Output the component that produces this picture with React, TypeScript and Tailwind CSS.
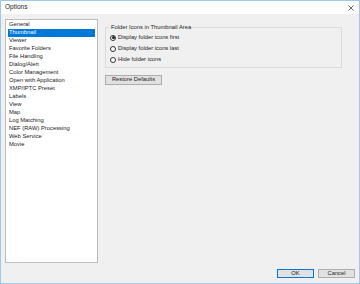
import React from "react";

const categories = [
  "General",
  "Thumbnail",
  "Viewer",
  "Favorite Folders",
  "File Handling",
  "Dialog/Alert",
  "Color Management",
  "Open with Application",
  "XMP/IPTC Preset",
  "Labels",
  "View",
  "Map",
  "Log Matching",
  "NEF (RAW) Processing",
  "Web Service",
  "Movie",
];

const radios = [
  { label: "Display folder icons first", checked: true },
  { label: "Display folder icons last", checked: false },
  { label: "Hide folder icons", checked: false },
];

function Radio({ checked }: { checked: boolean }) {
  return (
    <span className="w-[6px] h-[6px] rounded-full border border-[#333] bg-white flex items-center justify-center shrink-0">
      {checked && <span className="w-[3px] h-[3px] rounded-full bg-[#222]" />}
    </span>
  );
}

export default function App() {
  return (
    <div
      className="w-[360px] h-[284px] border border-[#9fc8ec] flex flex-col text-[#1a1a1a]"
      style={{ fontFamily: '"Liberation Sans", Arial, sans-serif' }}
    >
      {/* Title bar */}
      <div className="h-[13px] bg-white flex items-center justify-between pl-[4px] pr-[4px] shrink-0">
        <span className="text-[6.5px] leading-none text-[#222]">Options</span>
        <svg width="6" height="6" viewBox="0 0 6 6" className="mr-[1px]">
          <path d="M0.5 0.5 L5.5 5.5 M5.5 0.5 L0.5 5.5" stroke="#555" strokeWidth="0.9" />
        </svg>
      </div>

      {/* Client area */}
      <div className="flex-1 bg-[#f0f0f0] flex flex-col pt-[5px] pl-[4px] pr-[4px] pb-[4px]">
        <div className="flex gap-[7px]">
          {/* Category list */}
          <div className="w-[93px] h-[244px] bg-white border border-[#bdbdbd] pt-[1px] px-[2px] shrink-0">
            {categories.map((c, i) => (
              <div
                key={c}
                className={
                  "h-[8px] flex items-center pl-[1px] text-[5.8px] leading-none whitespace-nowrap " +
                  (i === 1 ? "bg-[#0078d7] text-white" : "text-[#222]")
                }
              >
                {c}
              </div>
            ))}
          </div>

          {/* Settings panel */}
          <div className="flex flex-col items-start pt-[6px] w-[237px]">
            <fieldset className="w-[237px] h-[43px] border border-[#dcdcdc] pl-[4px] pt-[0px] m-0">
              <legend className="text-[5.8px] leading-none text-[#222] px-[1px]">
                Folder Icons in Thumbnail Area
              </legend>
              <div className="flex flex-col gap-[5px] pt-[4px]">
                {radios.map((r) => (
                  <div key={r.label} className="flex items-center gap-[2px] h-[6px]">
                    <Radio checked={r.checked} />
                    <span className="text-[5.8px] leading-none text-[#222] whitespace-nowrap">{r.label}</span>
                  </div>
                ))}
              </div>
            </fieldset>
            <button className="mt-[7px] w-[57px] h-[10px] bg-[#e1e1e1] border border-[#adadad] text-[5.8px] leading-none text-[#222] flex items-center justify-center">
              Restore Defaults
            </button>
          </div>
        </div>

        {/* Bottom buttons */}
        <div className="flex justify-end gap-[4px] mt-[6px]">
          <button className="w-[37px] h-[9px] bg-[#e1e1e1] border border-[#0078d7] text-[5.8px] leading-none text-[#222] flex items-center justify-center">
            OK
          </button>
          <button className="w-[37px] h-[9px] bg-[#e1e1e1] border border-[#adadad] text-[5.8px] leading-none text-[#222] flex items-center justify-center">
            Cancel
          </button>
        </div>
      </div>
    </div>
  );
}
